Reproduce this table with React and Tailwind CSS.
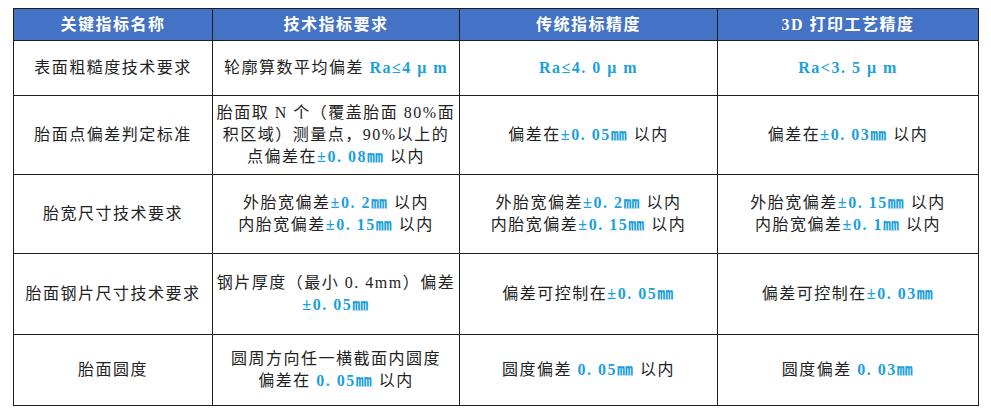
import React from "react";

const B = ({ children }) => <span className="text-[#1c9fdd] font-semibold">{children}</span>;

const rows = [
  {
    h: "h-[55px]",
    cells: [
      "表面粗糙度技术要求",
      <>轮廓算数平均偏差 <B>Ra≤4 μ m</B></>,
      <B>Ra≤4. 0 μ m</B>,
      <B>Ra&lt;3. 5 μ m</B>,
    ],
  },
  {
    h: "h-[79px]",
    cells: [
      "胎面点偏差判定标准",
      <>胎面取 N 个（覆盖胎面 80%面<br />积区域）测量点，90%以上的<br />点偏差在<B>±0. 08㎜</B> 以内</>,
      <>偏差在<B>±0. 05㎜</B> 以内</>,
      <>偏差在<B>±0. 03㎜</B> 以内</>,
    ],
  },
  {
    h: "h-[79px]",
    cells: [
      "胎宽尺寸技术要求",
      <>外胎宽偏差<B>±0. 2㎜</B> 以内<br />内胎宽偏差<B>±0. 15㎜</B> 以内</>,
      <>外胎宽偏差<B>±0. 2㎜</B> 以内<br />内胎宽偏差<B>±0. 15㎜</B> 以内</>,
      <>外胎宽偏差<B>±0. 15㎜</B> 以内<br />内胎宽偏差<B>±0. 1㎜</B> 以内</>,
    ],
  },
  {
    h: "h-[81px]",
    cells: [
      "胎面钢片尺寸技术要求",
      <>钢片厚度（最小 0. 4mm）偏差<br /><B>±0. 05㎜</B></>,
      <>偏差可控制在<B>±0. 05㎜</B></>,
      <>偏差可控制在<B>±0. 03㎜</B></>,
    ],
  },
  {
    h: "h-[71px]",
    cells: [
      "胎面圆度",
      <>圆周方向任一横截面内圆度<br />偏差在 <B>0. 05㎜</B> 以内</>,
      <>圆度偏差 <B>0. 05㎜</B> 以内</>,
      <>圆度偏差 <B>0. 03㎜</B></>,
    ],
  },
];

const heads = ["关键指标名称", "技术指标要求", "传统指标精度", "3D 打印工艺精度"];

export default function App() {
  return (
    <div
      className="w-[991px] h-[414px] bg-white pt-2 pl-[13px]"
      style={{ fontFamily: '"Liberation Serif", "Noto Sans CJK SC", serif' }}
    >
      <table className="border-collapse table-fixed w-[965px] text-[16px] leading-[22px] tracking-[1.5px] text-[#222]">
        <colgroup>
          <col className="w-[199px]" />
          <col className="w-[247px]" />
          <col className="w-[258px]" />
          <col className="w-[261px]" />
        </colgroup>
        <thead>
          <tr className="h-[32px] bg-[#4472c4]">
            {heads.map((t) => (
              <th key={t} className="border border-[#1f1f1f] text-white font-bold text-center p-0">
                {t}
              </th>
            ))}
          </tr>
        </thead>
        <tbody>
          {rows.map((r, i) => (
            <tr key={i} className={r.h}>
              {r.cells.map((c, j) => (
                <td key={j} className="border border-[#1f1f1f] text-center align-middle p-0 whitespace-nowrap">
                  {c}
                </td>
              ))}
            </tr>
          ))}
        </tbody>
      </table>
    </div>
  );
}
